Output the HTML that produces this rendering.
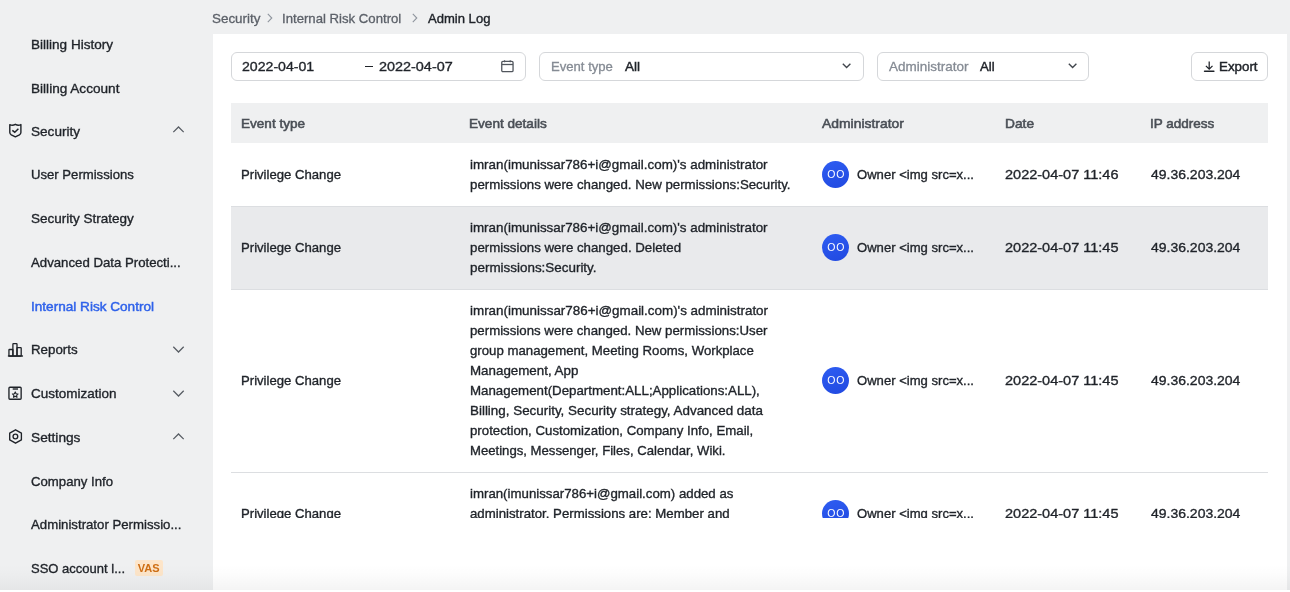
<!DOCTYPE html>
<html><head><meta charset="utf-8">
<style>
*{box-sizing:border-box;margin:0;padding:0}
html,body{width:1290px;height:592px;overflow:hidden;background:#fff}
body{font-family:"Liberation Sans",sans-serif;font-size:13px;color:#1f2329;position:relative}
#page{will-change:transform;position:absolute;left:0;top:0;width:1290px;height:590px;background:#eff0f1;overflow:hidden}
#panel{position:absolute;left:213px;top:33.5px;width:1073.5px;height:600px;background:#fff}
.box{position:absolute;top:52px;height:29px;border:1px solid #d5d7da;border-radius:6px;background:#fff}
#thead{position:absolute;left:231px;top:102.5px;width:1037px;height:40.5px;background:#eff0f1}
.rowb{position:absolute;left:231px;width:1037px;height:1px;background:#dcdee1}
#clip{position:absolute;left:0;top:0;width:1290px;height:518px;overflow:hidden}
.tx{position:absolute;white-space:nowrap;line-height:20px;height:20px;transform-origin:0 0}
.side{color:#1f2329;-webkit-text-stroke:0.35px #1f2329}
.side.act{color:#2f62ea;-webkit-text-stroke:0.45px #2f62ea}
.crumb{color:#5c6169;-webkit-text-stroke:0.3px #5c6169}
.crumb.cur{color:#1f2329;-webkit-text-stroke:0.4px #1f2329}
.fil{color:#1f2329;-webkit-text-stroke:0.35px #1f2329}
.fil.lbl{color:#858b94;-webkit-text-stroke:0.3px #858b94}
.fil.med{-webkit-text-stroke:0.45px #1f2329}
.th{color:#4a4f56;-webkit-text-stroke:0.55px #4a4f56}
.td{color:#1f2329;-webkit-text-stroke:0.35px #1f2329}
.av{position:absolute;width:27px;height:27px;border-radius:50%;background:linear-gradient(160deg,#2e5df2,#2149e0);color:#fff;font-size:10.5px;line-height:26px;text-align:center;letter-spacing:0.9px;text-indent:0.9px}
svg{position:absolute;overflow:visible}
.vas{position:absolute;left:134.5px;top:559.5px;width:28.5px;height:16.5px;border-radius:2px;background:#fde5c9;color:#cf6f14;font-size:11px;font-weight:bold;line-height:17.5px;text-align:center}
#shade{position:absolute;left:0;top:564px;width:1290px;height:26px;background:linear-gradient(to bottom,rgba(0,0,0,0),rgba(0,0,0,0.012) 40%,rgba(0,0,0,0.045))}
</style></head><body>
<div id="page">
  <!-- sidebar icons -->
  <svg style="left:8px;top:123px" width="15" height="15" viewBox="0 0 15 15"><path d="M1.8 1.6 Q4.6 2.9 7.35 1.3 Q10.1 2.9 12.9 1.6 V9.5 Q12.9 10.8 11.4 11.8 L7.35 13.8 L3.3 11.8 Q1.8 10.8 1.8 9.5 Z" fill="none" stroke="#1f2329" stroke-width="1.4" stroke-linejoin="round"/><path d="M4.3 7.4 L6.75 9.2 L10.4 5.7" fill="none" stroke="#1f2329" stroke-width="1.45"/></svg>
  <svg style="left:4px;top:338px" width="24" height="24" viewBox="0 0 24 24"><rect x="4.95" y="11.5" width="3.95" height="6.6" rx="0.5" fill="none" stroke="#1f2329" stroke-width="1.3"/><rect x="8.9" y="5.7" width="4.1" height="12.4" rx="0.5" fill="none" stroke="#1f2329" stroke-width="1.3"/><rect x="13" y="9.7" width="4.2" height="8.4" rx="0.5" fill="none" stroke="#1f2329" stroke-width="1.3"/><path d="M4.5 18.1 H18.4" stroke="#1f2329" stroke-width="1.5" stroke-linecap="round"/></svg>
  <svg style="left:8px;top:385.5px" width="14" height="14" viewBox="0 0 14 14"><rect x="0.95" y="1.25" width="12.2" height="12" rx="1.0" fill="none" stroke="#1f2329" stroke-width="1.35"/><path d="M4.7 3.0 H10" stroke="#1f2329" stroke-width="1.4"/><path d="M7.25 5.90 L8.10 7.73 L10.10 7.97 L8.63 9.35 L9.01 11.33 L7.25 10.35 L5.49 11.33 L5.87 9.35 L4.40 7.97 L6.40 7.73 Z" fill="none" stroke="#1f2329" stroke-width="1.1" stroke-linejoin="round"/></svg>
  <svg style="left:8.5px;top:429px" width="14" height="15" viewBox="0 0 14 15"><path d="M6.55 0.8 L12.4 4.1 V10.9 L6.55 14.2 L0.7 10.9 V4.1 Z" fill="none" stroke="#1f2329" stroke-width="1.35" stroke-linejoin="round"/><circle cx="6.4" cy="7.45" r="2.35" fill="none" stroke="#1f2329" stroke-width="1.35"/></svg>
  <!-- sidebar chevrons -->
  <svg style="left:172px;top:126.3px" width="13" height="8" viewBox="0 0 13 8"><path d="M1.3 6.1 L6.5 1 L11.7 6.1" fill="none" stroke="#575c63" stroke-width="1.25"/></svg>
  <svg style="left:172px;top:344.85px" width="13" height="8" viewBox="0 0 13 8"><path d="M1.3 1.8 L6.5 7 L11.7 1.8" fill="none" stroke="#575c63" stroke-width="1.25"/></svg>
  <svg style="left:172px;top:388.6px" width="13" height="8" viewBox="0 0 13 8"><path d="M1.3 1.8 L6.5 7 L11.7 1.8" fill="none" stroke="#575c63" stroke-width="1.25"/></svg>
  <svg style="left:172px;top:432.6px" width="13" height="8" viewBox="0 0 13 8"><path d="M1.3 6.1 L6.5 1 L11.7 6.1" fill="none" stroke="#575c63" stroke-width="1.25"/></svg>
  <div class="vas">VAS</div>
  <!-- breadcrumb separators -->
  <svg style="left:267px;top:13.2px" width="6" height="10" viewBox="0 0 6 10"><path d="M0.8 0.8 L4.8 5 L0.8 9.2" fill="none" stroke="#8f959e" stroke-width="1.1"/></svg>
  <svg style="left:412.3px;top:13.2px" width="6" height="10" viewBox="0 0 6 10"><path d="M0.8 0.8 L4.8 5 L0.8 9.2" fill="none" stroke="#8f959e" stroke-width="1.1"/></svg>

  <div id="panel"></div>
  <!-- filters -->
  <div class="box" style="left:231px;width:295px"></div>
  <div class="box" style="left:539px;width:325px"></div>
  <div class="box" style="left:877px;width:212px"></div>
  <div class="box" style="left:1191px;width:77px"></div>
  <div style="position:absolute;left:365px;top:66px;width:7.5px;height:1.2px;background:#1f2329"></div>
  <svg style="left:501px;top:60px" width="13" height="13" viewBox="0 0 13 13"><rect x="0.75" y="1.4" width="11.3" height="10.3" rx="1.2" fill="none" stroke="#51565d" stroke-width="1.3"/><path d="M0.8 4.5 H12" stroke="#51565d" stroke-width="1.3"/><path d="M3.6 0.2 V2.2 M9.2 0.2 V2.2" stroke="#51565d" stroke-width="1.1"/></svg>
  <svg style="left:842px;top:63.2px" width="10" height="6" viewBox="0 0 10 6"><path d="M0.8 0.8 L4.6 4.6 L8.4 0.8" fill="none" stroke="#41464d" stroke-width="1.35"/></svg>
  <svg style="left:1068px;top:63.2px" width="10" height="6" viewBox="0 0 10 6"><path d="M0.8 0.8 L4.6 4.6 L8.4 0.8" fill="none" stroke="#41464d" stroke-width="1.35"/></svg>
  <svg style="left:1203.5px;top:61px" width="11" height="12" viewBox="0 0 11 12"><path d="M5.2 0.6 V8.2 M1.9 4.9 L5.2 8.2 L8.5 4.9" fill="none" stroke="#1f2329" stroke-width="1.25"/><path d="M0.5 10.3 H9.9" fill="none" stroke="#1f2329" stroke-width="1.4" stroke-linecap="round"/></svg>
  <!-- table header -->
  <div id="thead"></div>
  <div id="clip">
    <div style="position:absolute;left:231px;top:206px;width:1037px;height:83px;background:#e9eaec"></div>
    <div class="rowb" style="top:205.5px"></div>
    <div class="rowb" style="top:288.5px"></div>
    <div class="rowb" style="top:471.5px"></div>
    <div class="av" style="left:822.3px;top:161px">OO</div>
    <div class="av" style="left:822.3px;top:234px">OO</div>
    <div class="av" style="left:822.3px;top:367px">OO</div>
    <div class="av" style="left:822.3px;top:500px">OO</div>
    <span id="t28" class="tx td" style="left:241.20px;top:165.10px;transform:scaleX(1.0100)">Privilege Change</span>
    <span id="t29" class="tx td" style="left:469.50px;top:155.10px;transform:scaleX(1.0291)">imran(imunissar786+i@gmail.com)&#x27;s administrator</span>
    <span id="t30" class="tx td" style="left:469.50px;top:175.10px;transform:scaleX(1.0206)">permissions were changed. New permissions:Security.</span>
    <span id="t31" class="tx td" style="left:857.00px;top:165.10px;transform:scaleX(1.0060)">Owner &lt;img src=x...</span>
    <span id="t32" class="tx td" style="left:1005.00px;top:165.10px;transform:scaleX(1.1163)">2022-04-07 11:46</span>
    <span id="t33" class="tx td" style="left:1151.20px;top:165.10px;transform:scaleX(1.0750)">49.36.203.204</span>
    <span id="t34" class="tx td" style="left:241.20px;top:238.10px;transform:scaleX(1.0100)">Privilege Change</span>
    <span id="t35" class="tx td" style="left:469.50px;top:218.10px;transform:scaleX(1.0291)">imran(imunissar786+i@gmail.com)&#x27;s administrator</span>
    <span id="t36" class="tx td" style="left:469.50px;top:238.10px;transform:scaleX(1.0210)">permissions were changed. Deleted</span>
    <span id="t37" class="tx td" style="left:469.50px;top:258.10px;transform:scaleX(1.0323)">permissions:Security.</span>
    <span id="t38" class="tx td" style="left:857.00px;top:238.10px;transform:scaleX(1.0060)">Owner &lt;img src=x...</span>
    <span id="t39" class="tx td" style="left:1005.00px;top:238.10px;transform:scaleX(1.1163)">2022-04-07 11:45</span>
    <span id="t40" class="tx td" style="left:1151.20px;top:238.10px;transform:scaleX(1.0750)">49.36.203.204</span>
    <span id="t41" class="tx td" style="left:241.20px;top:371.10px;transform:scaleX(1.0100)">Privilege Change</span>
    <span id="t42" class="tx td" style="left:469.50px;top:301.10px;transform:scaleX(1.0308)">imran(imunissar786+i@gmail.com)&#x27;s administrator</span>
    <span id="t43" class="tx td" style="left:469.50px;top:321.10px;transform:scaleX(1.0189)">permissions were changed. New permissions:User</span>
    <span id="t44" class="tx td" style="left:469.50px;top:341.10px;transform:scaleX(1.0158)">group management, Meeting Rooms, Workplace</span>
    <span id="t45" class="tx td" style="left:469.50px;top:361.10px;transform:scaleX(1.0265)">Management, App</span>
    <span id="t46" class="tx td" style="left:469.50px;top:381.10px;transform:scaleX(1.0231)">Management(Department:ALL;Applications:ALL),</span>
    <span id="t47" class="tx td" style="left:469.50px;top:401.10px;transform:scaleX(1.0307)">Billing, Security, Security strategy, Advanced data</span>
    <span id="t48" class="tx td" style="left:469.50px;top:421.10px;transform:scaleX(1.0181)">protection, Customization, Company Info, Email,</span>
    <span id="t49" class="tx td" style="left:469.50px;top:441.10px;transform:scaleX(1.0104)">Meetings, Messenger, Files, Calendar, Wiki.</span>
    <span id="t50" class="tx td" style="left:857.00px;top:371.10px;transform:scaleX(1.0060)">Owner &lt;img src=x...</span>
    <span id="t51" class="tx td" style="left:1005.00px;top:371.10px;transform:scaleX(1.1163)">2022-04-07 11:45</span>
    <span id="t52" class="tx td" style="left:1151.20px;top:371.10px;transform:scaleX(1.0750)">49.36.203.204</span>
    <span id="t53" class="tx td" style="left:241.20px;top:504.30px;transform:scaleX(1.0100)">Privilege Change</span>
    <span id="t54" class="tx td" style="left:469.50px;top:484.30px;transform:scaleX(1.0190)">imran(imunissar786+i@gmail.com) added as</span>
    <span id="t55" class="tx td" style="left:469.50px;top:504.30px;transform:scaleX(1.0179)">administrator. Permissions are: Member and</span>
    <span id="t56" class="tx td" style="left:469.50px;top:524.30px;transform:scaleX(1.0000)">management, Billing, Security, Security</span>
    <span id="t57" class="tx td" style="left:857.00px;top:504.30px;transform:scaleX(1.0060)">Owner &lt;img src=x...</span>
    <span id="t58" class="tx td" style="left:1005.00px;top:504.30px;transform:scaleX(1.1163)">2022-04-07 11:45</span>
    <span id="t59" class="tx td" style="left:1151.20px;top:504.30px;transform:scaleX(1.0750)">49.36.203.204</span>
  </div>
    <span id="t0" class="tx side" style="left:31.20px;top:34.90px;transform:scaleX(1.0418)">Billing History</span>
    <span id="t1" class="tx side" style="left:31.20px;top:79.30px;transform:scaleX(1.0459)">Billing Account</span>
    <span id="t2" class="tx side" style="left:31.20px;top:121.60px;transform:scaleX(1.0442)">Security</span>
    <span id="t3" class="tx side" style="left:31.20px;top:165.30px;transform:scaleX(1.0093)">User Permissions</span>
    <span id="t4" class="tx side" style="left:31.20px;top:209.00px;transform:scaleX(1.0388)">Security Strategy</span>
    <span id="t5" class="tx side" style="left:31.20px;top:252.60px;transform:scaleX(1.0156)">Advanced Data Protecti...</span>
    <span id="t6" class="tx side act" style="left:31.20px;top:296.60px;transform:scaleX(1.0447)">Internal Risk Control</span>
    <span id="t7" class="tx side" style="left:31.20px;top:340.00px;transform:scaleX(1.0240)">Reports</span>
    <span id="t8" class="tx side" style="left:31.20px;top:384.10px;transform:scaleX(1.0372)">Customization</span>
    <span id="t9" class="tx side" style="left:31.20px;top:427.60px;transform:scaleX(1.0525)">Settings</span>
    <span id="t10" class="tx side" style="left:31.20px;top:471.80px;transform:scaleX(1.0133)">Company Info</span>
    <span id="t11" class="tx side" style="left:31.20px;top:515.20px;transform:scaleX(1.0157)">Administrator Permissio...</span>
    <span id="t12" class="tx side" style="left:31.20px;top:558.60px;transform:scaleX(1.0007)">SSO account l...</span>
    <span id="t13" class="tx crumb" style="left:212.00px;top:8.60px;transform:scaleX(1.0311)">Security</span>
    <span id="t14" class="tx crumb" style="left:282.40px;top:8.60px;transform:scaleX(1.0130)">Internal Risk Control</span>
    <span id="t15" class="tx crumb cur" style="left:427.50px;top:8.60px;transform:scaleX(1.0040)">Admin Log</span>
    <span id="t16" class="tx fil" style="left:241.50px;top:57.10px;transform:scaleX(1.0855)">2022-04-01</span>
    <span id="t17" class="tx fil" style="left:378.80px;top:57.10px;transform:scaleX(1.1084)">2022-04-07</span>
    <span id="t18" class="tx fil lbl" style="left:551.40px;top:57.10px;transform:scaleX(1.0077)">Event type</span>
    <span id="t19" class="tx fil med" style="left:624.50px;top:57.10px;transform:scaleX(1.0407)">All</span>
    <span id="t20" class="tx fil lbl" style="left:888.50px;top:57.10px;transform:scaleX(1.0373)">Administrator</span>
    <span id="t21" class="tx fil med" style="left:979.50px;top:57.10px;transform:scaleX(1.0109)">All</span>
    <span id="t22" class="tx fil med" style="left:1218.50px;top:57.10px;transform:scaleX(1.0252)">Export</span>
    <span id="t23" class="tx th" style="left:241.30px;top:113.50px;transform:scaleX(1.0424)">Event type</span>
    <span id="t24" class="tx th" style="left:469.40px;top:113.50px;transform:scaleX(1.0444)">Event details</span>
    <span id="t25" class="tx th" style="left:822.20px;top:113.50px;transform:scaleX(1.0691)">Administrator</span>
    <span id="t26" class="tx th" style="left:1004.60px;top:113.50px;transform:scaleX(1.0579)">Date</span>
    <span id="t27" class="tx th" style="left:1150.20px;top:113.50px;transform:scaleX(1.0374)">IP address</span>
  <div id="shade"></div>
</div>
</body></html>
